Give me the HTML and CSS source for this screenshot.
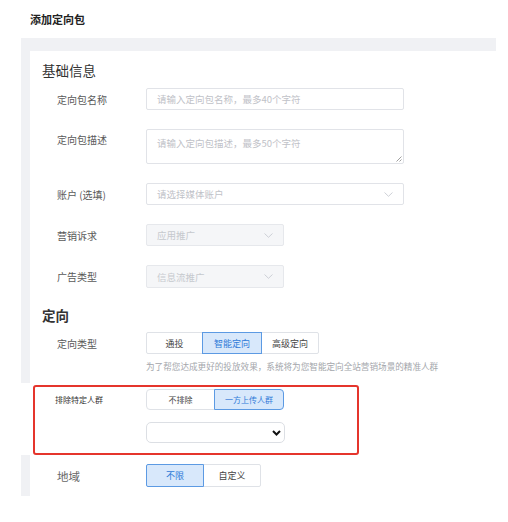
FILE: index.html
```html
<!DOCTYPE html>
<html lang="zh-CN">
<head>
<meta charset="utf-8">
<title>添加定向包</title>
<link rel="stylesheet" href="styles.css">
</head>
<body>
<div class="page-title">添加定向包</div>
<div class="panel">
  <div class="card">
    <div class="section-title">基础信息</div>

    <div class="form-row row-input">
      <div class="field-label">定向包名称</div>
      <div class="text-input"><span class="placeholder">请输入定向包名称，最多40个字符</span></div>
    </div>

    <div class="form-row row-textarea">
      <div class="field-label">定向包描述</div>
      <div class="text-area">
        <span class="placeholder">请输入定向包描述，最多50个字符</span>
        <svg class="grip" width="7" height="7" viewBox="0 0 7 7"><path d="M6.5 1.5 1.5 6.5M6.5 4.5 4.5 6.5" stroke="#888" stroke-width="0.8" fill="none"/></svg>
      </div>
    </div>

    <div class="form-row row-input">
      <div class="field-label">账户 (选填)</div>
      <div class="text-input select-box"><span class="placeholder">请选择媒体账户</span>
        <svg class="arrow" width="9" height="5" viewBox="0 0 9 5"><path d="M0.5 0.5 4.5 4.3 8.5 0.5" stroke="#c8ccd3" stroke-width="0.9" fill="none"/></svg>
      </div>
    </div>

    <div class="form-row row-input">
      <div class="field-label">营销诉求</div>
      <div class="text-input select-box disabled"><span class="placeholder">应用推广</span>
        <svg class="arrow" width="9" height="5" viewBox="0 0 9 5"><path d="M0.5 0.5 4.5 4.3 8.5 0.5" stroke="#c8ccd3" stroke-width="0.9" fill="none"/></svg>
      </div>
    </div>

    <div class="form-row row-input row-tall">
      <div class="field-label">广告类型</div>
      <div class="text-input select-box disabled"><span class="placeholder">信息流推广</span>
        <svg class="arrow" width="9" height="5" viewBox="0 0 9 5"><path d="M0.5 0.5 4.5 4.3 8.5 0.5" stroke="#c8ccd3" stroke-width="0.9" fill="none"/></svg>
      </div>
    </div>

    <div class="section-title bold">定向</div>

    <div class="form-row row-type">
      <div class="field-label">定向类型</div>
      <div class="btn-group">
        <span class="btn w56">通投</span>
        <span class="btn w59 active">智能定向</span>
        <span class="btn w57">高级定向</span>
      </div>
    </div>
    <div class="help-text">为了帮您达成更好的投放效果，系统将为您智能定向全站营销场景的精准人群</div>

    <div class="exclude-wrap">
      <div class="exclude-box">
        <div class="exclude-row">
          <div class="exclude-label">排除特定人群</div>
          <div class="btn-group round">
            <span class="btn w68 small">不排除</span>
            <span class="btn w69 small active">一方上传人群</span>
          </div>
        </div>
        <div class="exclude-select">
          <svg width="9" height="6" viewBox="0 0 9 6"><path d="M1 1 4.5 4.5 8 1" stroke="#111" stroke-width="2" fill="none"/></svg>
        </div>
      </div>
    </div>

    <div class="form-row row-region">
      <div class="field-label big">地域</div>
      <div class="btn-group">
        <span class="btn w57 tall active">不限</span>
        <span class="btn w57 tall">自定义</span>
      </div>
    </div>
  </div>
</div>
</body>
</html>
```

FILE: styles.css
```css
* { box-sizing: border-box; }
body {
  margin: 0;
  background: #fff;
  font-family: "Noto Sans CJK SC", "Noto Sans", sans-serif;
  color: #333;
}
.page-title {
  height: 38px;
  padding-left: 30px;
  display: flex;
  align-items: center;
  font-size: 11px;
  font-weight: 700;
  color: #222;
}
.panel {
  margin-left: 21px;
  width: 475px;
  height: 458px;
  background: #f0f1f4;
  padding: 13px 0 0 9px;
}
.card {
  background: #fff;
  height: 445px;
  padding: 7px 0 0 12px;
}
.section-title {
  height: 24px;
  line-height: 24px;
  font-size: 13.5px;
  color: #333;
}
.section-title.bold { font-weight: 700; margin-top: 15px; }
.form-row {
  display: flex;
  align-items: center;
  padding-left: 15px;
}
.field-label {
  width: 89px;
  flex-shrink: 0;
  font-size: 10px;
  color: #5a5a5a;
}
.field-label.big { font-size: 11.5px; color: #666; }
.row-input { height: 22px; margin-top: 19px; }
.section-title + .row-input { margin-top: 6px; }
.row-tall { height: 23px; }
.row-textarea { align-items: flex-start; margin-top: 19px; }
.row-textarea .field-label { line-height: 22px; }
.text-input {
  width: 258px;
  height: 22px;
  border: 1px solid #e1e3e8;
  border-radius: 2px;
  padding-left: 10px;
  display: flex;
  align-items: center;
  position: relative;
}
.row-tall .text-input { height: 23px; }
.placeholder { font-size: 9.5px; color: #bfc2c8; }
.text-area {
  width: 258px;
  height: 35px;
  border: 1px solid #e1e3e8;
  border-radius: 2px;
  padding: 4px 10px;
  position: relative;
  line-height: 12px;
}
.grip { position: absolute; right: 1px; bottom: 1px; }
.select-box .arrow { position: absolute; right: 10px; top: 8px; }
.text-input.disabled {
  width: 138px;
  background: #f5f6f8;
  border-color: #e6e8ec;
}
.text-input.disabled .placeholder { color: #c6c9ce; }
.row-type { height: 22px; margin-top: 5px; }
.btn-group { display: flex; }
.btn {
  height: 22px;
  border: 1px solid #dfe2e7;
  margin-left: -1px;
  display: flex;
  align-items: center;
  justify-content: center;
  font-size: 9px;
  color: #444;
  background: #fff;
}
.btn:first-child { margin-left: 0; border-radius: 2px 0 0 2px; }
.btn:last-child { border-radius: 0 2px 2px 0; }
.btn.active {
  background: #d8e8fb;
  border-color: #5c9ae3;
  color: #2f7ad8;
  position: relative;
  z-index: 1;
}
.btn.small { height: 21px; font-size: 8px; }
.btn.tall { height: 23px; }
.round .btn:first-child { border-radius: 4px 0 0 4px; }
.round .btn:last-child { border-radius: 0 4px 4px 0; }
.w56 { width: 57px; }
.w57 { width: 58px; }
.w59 { width: 60px; }
.w68 { width: 69px; }
.w69 { width: 70px; }
.help-text {
  margin-top: 6px;
  margin-left: 104px;
  height: 12px;
  line-height: 12px;
  font-size: 8.6px;
  color: #a3a6ab;
  white-space: nowrap;
}
.exclude-wrap {
  margin: 11px 0 0 -21px;
  width: 360px;
  height: 72px;
  background: #fff;
  padding: 2px 0 0 12px;
}
.exclude-box {
  width: 326px;
  height: 70px;
  border: 2px solid #e5352c;
  border-radius: 3px;
  padding: 2px 0 0 20px;
}
.exclude-row { display: flex; align-items: center; height: 21px; }
.exclude-label { width: 91px; flex-shrink: 0; font-size: 8px; color: #333; }
.exclude-select {
  margin: 12px 0 0 91px;
  width: 139px;
  height: 21px;
  border: 1px solid #dcdfe4;
  border-radius: 5px;
  display: flex;
  align-items: center;
  justify-content: flex-end;
  padding-right: 3px;
}
.row-region { height: 23px; margin-top: 9px; }
```
